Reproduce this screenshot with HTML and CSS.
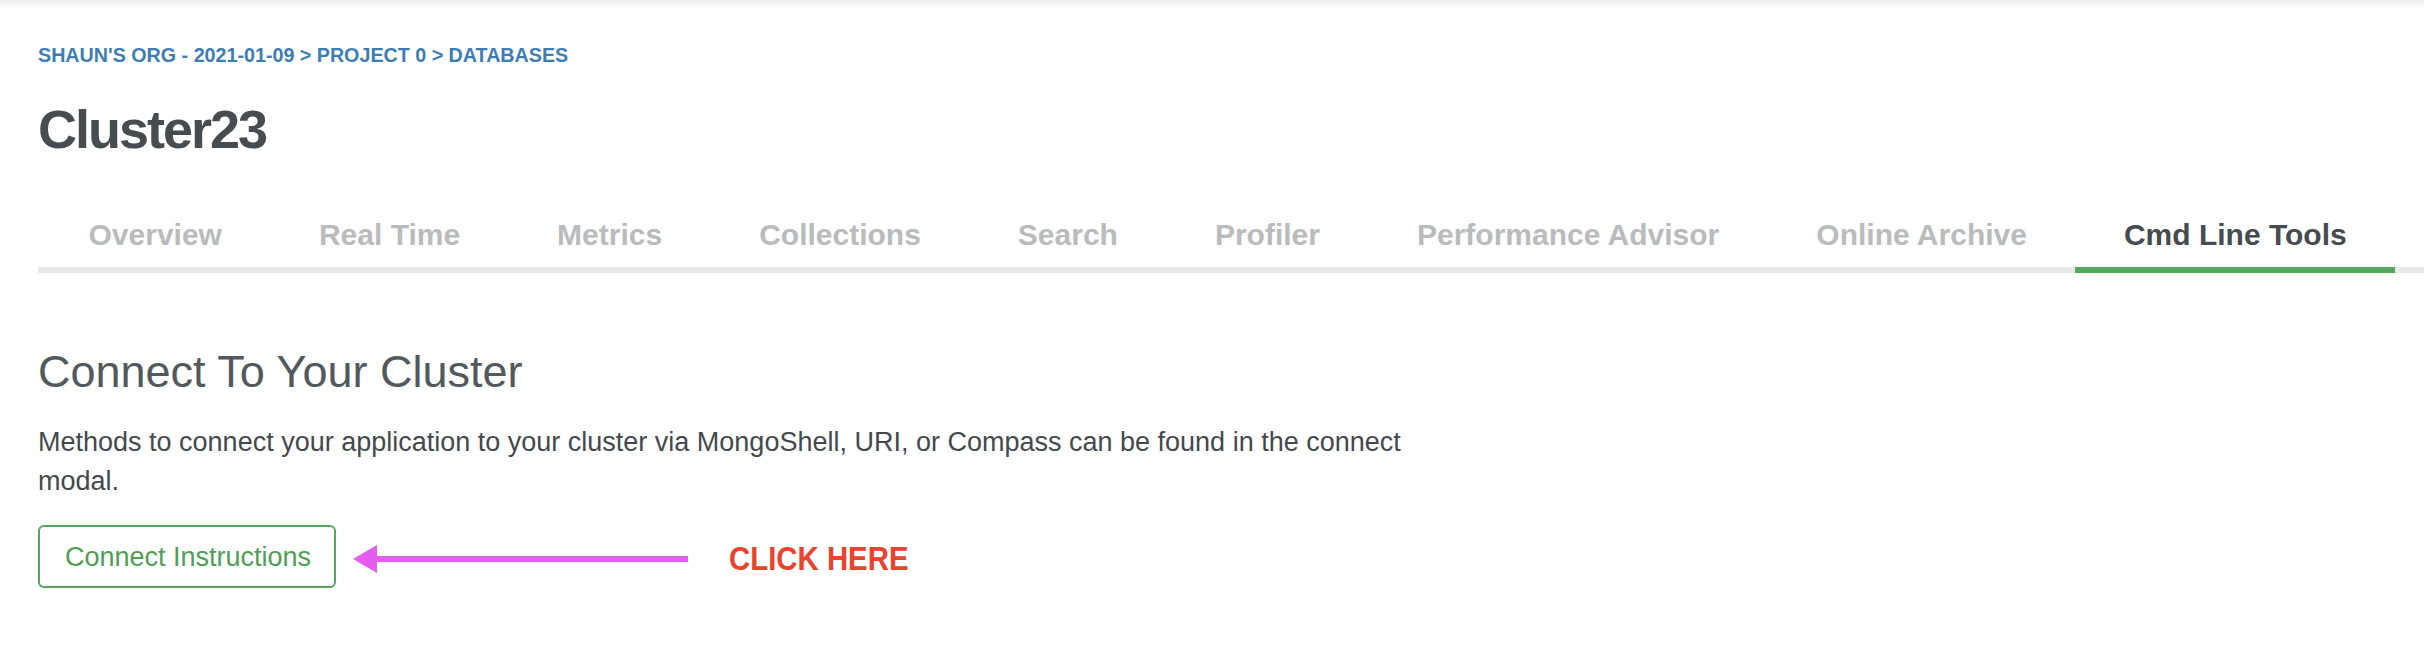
FILE: index.html
```html
<!DOCTYPE html>
<html lang="en">
<head>
<meta charset="utf-8">
<title>Cluster23 - Cmd Line Tools</title>
<link rel="stylesheet" href="styles.css">
</head>
<body>
<div class="topshade"></div>
<main class="page">
  <nav class="breadcrumb">SHAUN'S ORG - 2021-01-09 &gt; PROJECT 0 &gt; DATABASES</nav>
  <h1 class="cluster-title">Cluster23</h1>
  <ul class="tabs">
    <li class="tab">Overview</li>
    <li class="tab">Real Time</li>
    <li class="tab">Metrics</li>
    <li class="tab">Collections</li>
    <li class="tab">Search</li>
    <li class="tab">Profiler</li>
    <li class="tab">Performance Advisor</li>
    <li class="tab">Online Archive</li>
    <li class="tab tab-active">Cmd Line Tools</li>
  </ul>
  <section class="connect">
    <h2 class="connect-title">Connect To Your Cluster</h2>
    <p class="connect-text">Methods to connect your application to your cluster via MongoShell, URI, or Compass can be found in the connect modal.</p>
    <div class="action-row">
      <button class="btn-outline" type="button">Connect Instructions</button>
      <svg class="arrow" width="335" height="28" viewBox="0 0 335 28" aria-hidden="true">
        <polygon points="0,14 24,0 24,28" fill="#e55cf0"/>
        <rect x="23" y="11" width="312" height="6" fill="#e55cf0"/>
      </svg>
      <span class="click-here">CLICK HERE</span>
    </div>
  </section>
</main>
</body>
</html>
```

FILE: styles.css
```css
html, body {
  margin: 0;
  padding: 0;
  background: #ffffff;
}

body {
  font-family: "Liberation Sans", Arial, sans-serif;
  color: #474c50;
}

.topshade {
  height: 9px;
  background: linear-gradient(#eeeeee, #ffffff);
}

.page {
  padding: 34px 0 0 38px;
}

.breadcrumb {
  font-size: 19.7px;
  line-height: 24px;
  font-weight: bold;
  color: #3e7db3;
}

.cluster-title {
  margin: 30px 0 0;
  font-size: 54px;
  line-height: 64px;
  font-weight: bold;
  letter-spacing: -2px;
  color: #474c50;
}

.tabs {
  list-style: none;
  margin: 56px 0 0;
  padding: 0 0 0 2px;
  display: flex;
  border-bottom: 6px solid #e7e8e8;
}

.tab {
  padding: 0 48.5px 14px;
  margin-bottom: -6px;
  border-bottom: 6px solid transparent;
  font-size: 30px;
  line-height: 36px;
  font-weight: bold;
  color: #b9bbbc;
  white-space: nowrap;
}

.tab-active {
  color: #464b4f;
  border-bottom-color: #55a75d;
}

.connect {
  padding-top: 73px;
}

.connect-title {
  margin: 0;
  font-size: 45px;
  line-height: 52px;
  font-weight: normal;
  color: #53585c;
}

.connect-text {
  margin: 25px 0 0;
  max-width: 1400px;
  font-size: 27px;
  line-height: 39px;
  color: #44494d;
}

.action-row {
  margin-top: 24px;
  display: flex;
  align-items: center;
}

.btn-outline {
  font-family: "Liberation Sans", Arial, sans-serif;
  font-size: 27px;
  line-height: 32px;
  padding: 13.5px 23px 13.5px 25px;
  border: 2px solid #56a45e;
  border-radius: 6px;
  background: #ffffff;
  color: #4f9e57;
}

.arrow {
  margin: 4px 41px 0 17px;
  flex: none;
}

.click-here {
  font-size: 33px;
  line-height: 36px;
  font-weight: bold;
  color: #e8432d;
  margin-top: 4px;
  transform: scaleX(0.89);
  transform-origin: left center;
}
```
